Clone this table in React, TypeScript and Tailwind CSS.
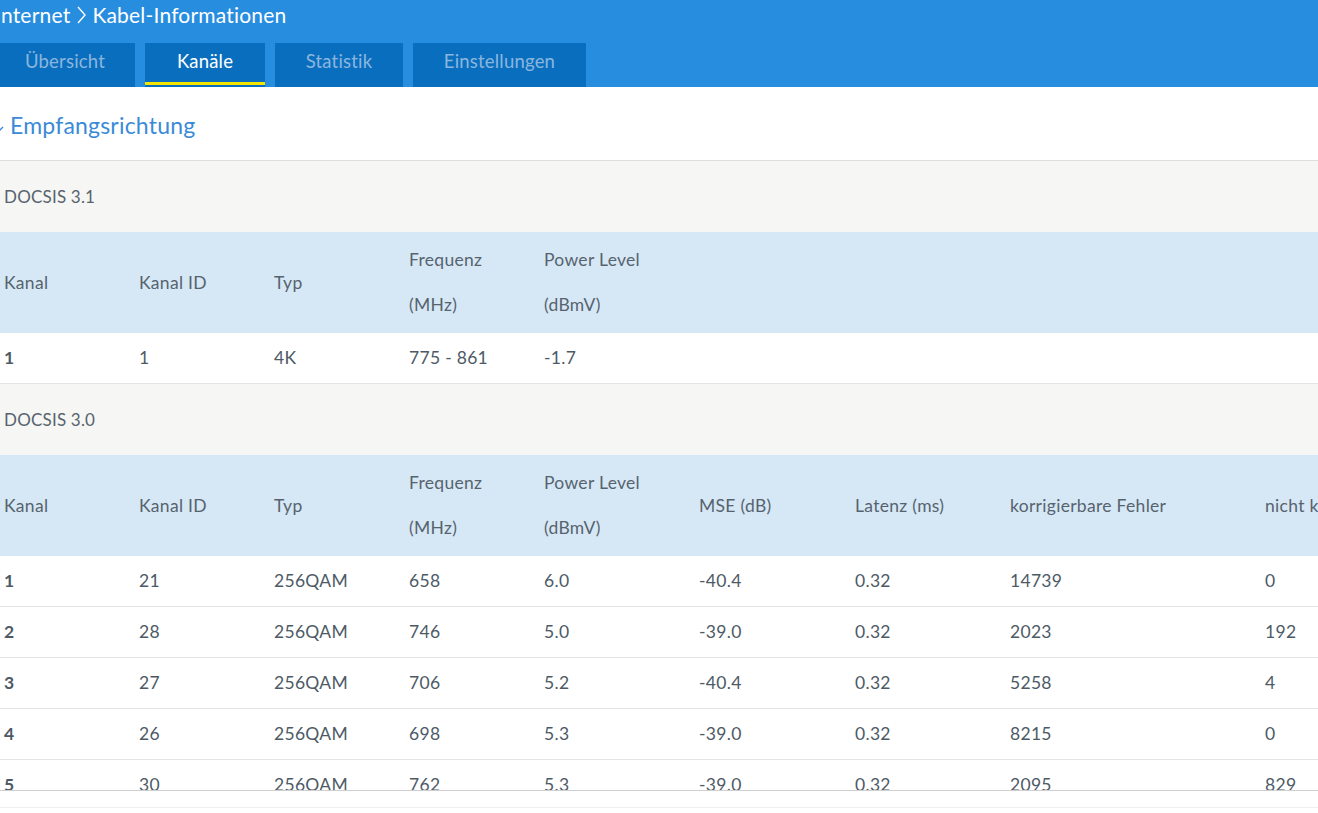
import React from "react";

const font = { fontFamily: "Lato, 'Open Sans', sans-serif" };

type Row = string[];

const cols = ["w-[135px]", "w-[135px]", "w-[135px]", "w-[135px]", "w-[155px]", "w-[156px]", "w-[155px]", "w-[255px]", "w-[200px]"];

const head31: Row[] = [["Kanal"], ["Kanal ID"], ["Typ"], ["Frequenz", "(MHz)"], ["Power Level", "(dBmV)"]];
const rows31: Row[] = [["1", "1", "4K", "775 - 861", "-1.7"]];

const head30: Row[] = [
  ["Kanal"],
  ["Kanal ID"],
  ["Typ"],
  ["Frequenz", "(MHz)"],
  ["Power Level", "(dBmV)"],
  ["MSE (dB)"],
  ["Latenz (ms)"],
  ["korrigierbare Fehler"],
  ["nicht korrigierbare Fehler"],
];
const rows30: Row[] = [
  ["1", "21", "256QAM", "658", "6.0", "-40.4", "0.32", "14739", "0"],
  ["2", "28", "256QAM", "746", "5.0", "-39.0", "0.32", "2023", "192"],
  ["3", "27", "256QAM", "706", "5.2", "-40.4", "0.32", "5258", "4"],
  ["4", "26", "256QAM", "698", "5.3", "-39.0", "0.32", "8215", "0"],
  ["5", "30", "256QAM", "762", "5.3", "-39.0", "0.32", "2095", "829"],
  ["6", "29", "256QAM", "754", "5.2", "-39.0", "0.32", "3120", "12"],
];

const tabs = [
  { t: "Übersicht", w: "w-[140px]" },
  { t: "Kanäle", w: "w-[120px]" },
  { t: "Statistik", w: "w-[128px]" },
  { t: "Einstellungen", w: "w-[173px]" },
];

function Section({ title, head, rows }: { title: string; head: Row[]; rows: Row[] }) {
  const n = 9;
  return (
    <>
      <tr className="bg-[#f6f6f4] border-t border-[#dedede]">
        <td colSpan={n} className="h-[71px] pl-[4px] text-[17px] tracking-[0.2px] text-[#56636e] align-middle">
          {title}
        </td>
      </tr>
      <tr className="bg-[#d6e8f6]">
        {Array.from({ length: n }).map((_, i) => {
          const h = head[i];
          return (
            <th key={i} className={`${cols[i]} h-[101px] pl-[4px] text-left font-normal align-middle text-[17.5px] tracking-[0.3px] leading-[45px] text-[#56636e] whitespace-nowrap`}>
              {h ? h.map((l, j) => <div key={j}>{l}</div>) : null}
            </th>
          );
        })}
      </tr>
      {rows.map((r, ri) => (
        <tr key={ri} className="border-b border-[#e4e4e4]">
          {Array.from({ length: n }).map((_, i) => (
            <td key={i} className={`h-[51px] pl-[4px] text-[17.5px] tracking-[0.3px] text-[#4d5a66] align-middle whitespace-nowrap ${i === 0 ? "font-bold" : ""}`}>
              {r[i] ?? ""}
            </td>
          ))}
        </tr>
      ))}
    </>
  );
}

export default function App() {
  return (
    <div className="w-[1318px] h-[813px] overflow-hidden bg-white" style={font}>
      <div className="bg-[#278ddf] h-[87px] flex flex-col">
        <div className="h-[43px] flex items-start pt-[1px] -ml-[5px] text-white text-[21px] leading-[28px] tracking-[0.2px]">
          <span>Internet</span>
          <svg width="14" height="28" viewBox="0 0 14 28" className="mx-[4px]" fill="none">
            <path d="M4 6 L11 14 L4 22" stroke="white" strokeWidth="1.4" />
          </svg>
          <span>Kabel-Informationen</span>
        </div>
        <div className="flex gap-[10px] -ml-[5px] h-[44px]">
          {tabs.map(({ t, w }) => {
            const active = t === "Kanäle";
            return (
              <div
                key={t}
                className={`${w} bg-[#0a6ebf] pb-[6px] flex items-center justify-center text-[18.5px] tracking-[0.2px] relative ${active ? "text-white" : "text-[#8ab6de]"}`}
              >
                {t}
                {active && <div className="absolute left-0 right-0 bottom-[2px] h-[3px] bg-[#f5e400]" />}
              </div>
            );
          })}
        </div>
      </div>
      <div className="h-[704px] overflow-hidden border-b border-[#cfcfcf]">
        <div className="h-[73px] flex items-center pt-[4px] -ml-[7px] text-[#3a8ad8] text-[23px] tracking-[0.2px]">
          <svg width="12" height="12" viewBox="0 0 12 12" fill="none" className="mr-[5px] mt-[6px]">
            <path d="M2 4 L6 8 L10 4" stroke="#3a8ad8" strokeWidth="1.4" />
          </svg>
          <span>Empfangsrichtung</span>
        </div>
        <table className="table-fixed border-collapse w-[1400px]">
          <colgroup>
            {cols.map((c, i) => (
              <col key={i} className={c} />
            ))}
          </colgroup>
          <tbody>
            <Section title="DOCSIS 3.1" head={head31} rows={rows31} />
            <Section title="DOCSIS 3.0" head={head30} rows={rows30} />
          </tbody>
        </table>
      </div>
      <div className="h-[17px] border-b border-[#f0f0f0]" />
    </div>
  );
}
